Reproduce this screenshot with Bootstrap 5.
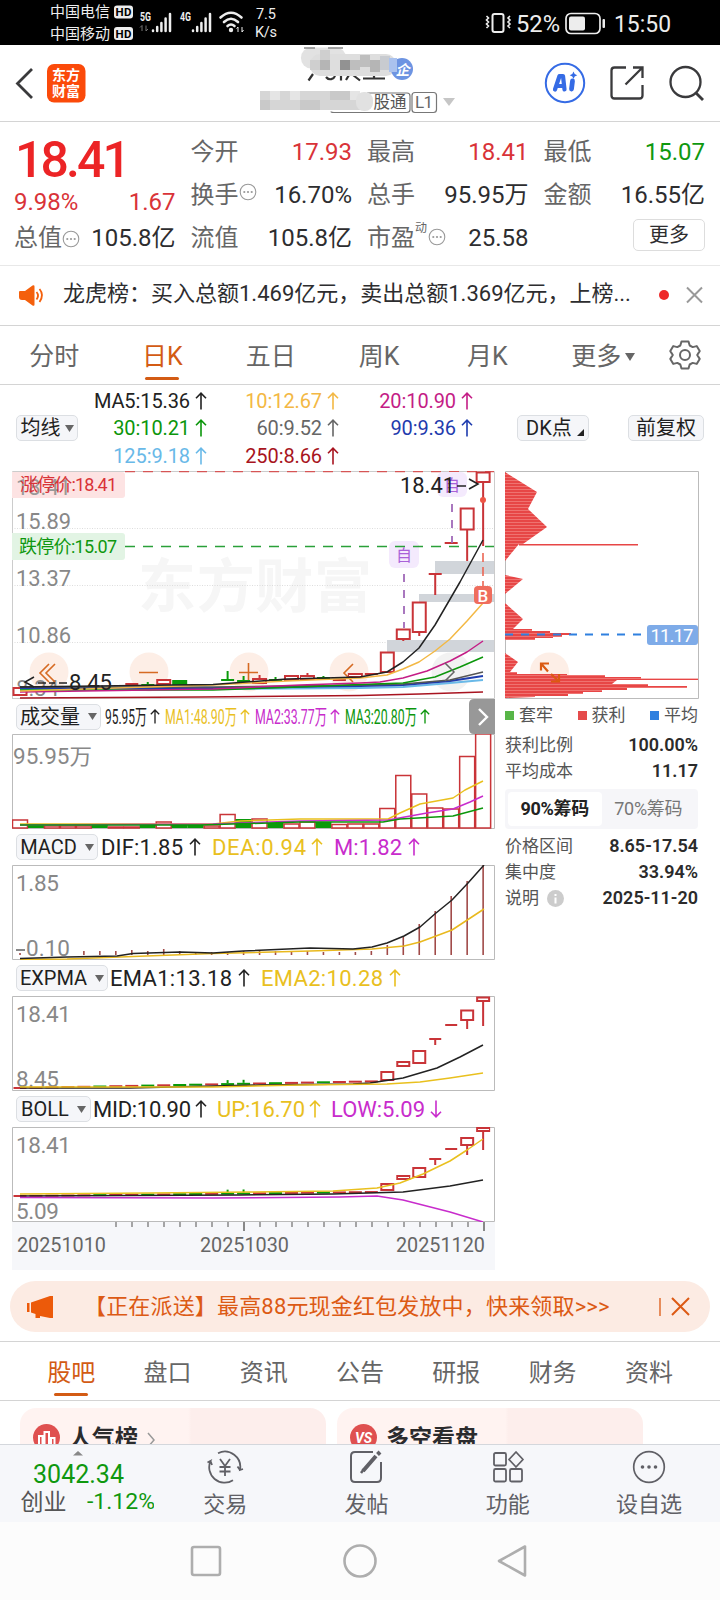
<!DOCTYPE html>
<html lang="zh-CN">
<head>
<meta charset="utf-8">
<meta name="viewport" content="width=device-width, initial-scale=1">
<title>东方财富 行情</title>
<link href="https://cdn.jsdelivr.net/npm/bootstrap@5.3.0/dist/css/bootstrap.min.css" rel="stylesheet">
<style>
body{width:720px;height:1600px;overflow:hidden;background:#fff;color:#2d2d2f;font-family:Roboto,"Noto Sans CJK SC",sans-serif;font-size:24px;line-height:1}
svg{display:block;flex:none}
svg text{font-family:Roboto,"Noto Sans CJK SC",sans-serif}
.up{color:#d93338}.dn{color:#0f980f}.lab{color:#666}
.statusbar{height:45px;background:#000}
.topbar{height:77px;border-bottom:1px solid #d4d4d4}
.quote{height:144px;border-bottom:1px solid #e8e8e8;padding:8px 0 0 14px;display:grid;grid-template-columns:repeat(4,161.5px);grid-template-rows:repeat(3,43px);column-gap:15px}
.quote>div{display:flex;align-items:center;justify-content:space-between;white-space:nowrap}
.price{font-size:50px;font-weight:500;letter-spacing:-2.9px;color:#ec2426;padding:16px 0 0 1px}
.morebtn{width:72px;height:32px;border:1px solid #ddd;border-radius:5px;font-size:20px;margin-bottom:5px}
.news{height:60px;border-bottom:1px solid #d4d4d4;font-size:22px;padding-left:18px}
.ktabs{height:59px;border-bottom:1px solid #d4d4d4;color:#666;font-size:25px;padding-top:3px}
.ktab{width:108.3px;position:relative}
.active-tab{color:#d35b14}
.active-tab::after{content:"";position:absolute;left:50%;width:34px;height:3px;margin-left:-17px;background:#d35b14;border-radius:2px;bottom:4px}
.ma{height:86px;padding-left:16px;font-size:20px}
.tagbtn{height:26px;background:#f5f6f9;border:1px solid #dcdfe3;border-radius:5px;font-size:20px;color:#1f1f21;white-space:nowrap;flex:none}
.magrid{display:grid;grid-template-columns:129px 132px 134px;grid-auto-rows:27.5px;padding-top:2px}
.magrid>div{display:flex;align-items:center;justify-content:flex-end;gap:5px;font-size:20px;letter-spacing:-.1px}
.charts{width:483px;margin-left:12px}
.indic{height:36px;padding-left:4px}
.indic svg{overflow:visible}
.chips{margin-left:10px;width:193px}
.chiprow{height:26px;font-size:17px;color:#555}
.chiprow b{color:#2b2b2b;font-weight:600;font-size:18px}
.seg{height:40px;background:#f6f6f9;border-radius:4px;padding:3px;margin:6px 0 4px;font-size:18px;color:#777}
.seg>div{width:50%;height:34px;letter-spacing:-.3px}
.seg-on{background:#fff;color:#222;font-weight:700;border-radius:4px;letter-spacing:-.8px}
.axis{height:48px;background:#f6f7fa}
.promo{height:51px;margin:11px 10px 9px;border-radius:26px;background:#fcebe3;color:#dc5a14;font-size:22px;padding:0 18px 0 15px;white-space:nowrap}
.btabs{height:60px;border-top:1px solid #d4d4d4;border-bottom:1px solid #d4d4d4;padding:3px 0 0 23px;color:#666;font-size:24px}
.btab{width:96.3px;position:relative}
.feeds{height:43px;overflow:hidden;padding:7px 0 0 20px;gap:11px}
.feed{width:306px;height:90px;border-radius:16px;flex:none;background:linear-gradient(90deg,#fff3f1 55%,#fdeeec 56%);font-size:23px;font-weight:700;color:#2b2b2d;padding:16px 0 0 13px;gap:9px}
.feed span{margin-top:3px}
.toolbar{height:78px;background:#f6f7fa;border-top:1px solid #d4d7dc}
.tool{width:141.3px;color:#606066;font-size:22px;gap:10px;padding:5px 0 0 1px}
.sysnav{height:79px;background:#fcfcfc}
</style>
</head>
<body>
<svg width="0" height="0" class="position-absolute">
  <defs>
    <symbol id="au" viewBox="0 0 12 18"><path d="M6 17.5V1.2M1 6.2L6 1.2l5 5" fill="none" stroke="currentColor" stroke-width="1.6"/></symbol>
    <symbol id="ad" viewBox="0 0 12 18"><path d="M6 .5v16.3M1 11.8l5 5 5-5" fill="none" stroke="currentColor" stroke-width="1.6"/></symbol>
    <symbol id="dots" viewBox="0 0 18 18"><circle cx="9" cy="9" r="7.8" fill="none" stroke="#999" stroke-width="1.1"/><g fill="#999"><circle cx="5.3" cy="9" r="1.1"/><circle cx="9" cy="9" r="1.1"/><circle cx="12.7" cy="9" r="1.1"/></g></symbol>
    <pattern id="stripe" width="4" height="3" patternUnits="userSpaceOnUse"><rect width="4" height="3" fill="#e74646"/><rect width="4" height=".8" fill="#f17d7b"/></pattern>
    <symbol id="bars" viewBox="0 0 22 21"><path d="M2 18.500v.5M6.2 15v4M10.4 11v8M14.600 6.500V19M19 2v17" stroke="#eee" stroke-width="2.500" stroke-linecap="round"/></symbol>
  </defs>
</svg>

<header class="statusbar">
  <svg width="720" height="45" fill="#ededed">
    <text x="50" y="17" font-size="15" textLength="60">中国电信</text><text x="50" y="38.500" font-size="15" textLength="60">中国移动</text>
    <rect x="114" y="5.500" width="19" height="13" rx="3"/><rect x="114" y="27" width="19" height="13" rx="3"/>
    <g fill="#000" font-weight="700" font-size="11.500"><text x="115.500" y="16" textLength="16">HD</text><text x="115.500" y="37.600" textLength="16">HD</text></g>
    <g font-size="12" font-weight="700"><text x="140" y="21" textLength="11" lengthAdjust="spacingAndGlyphs">5G</text><text x="180" y="21" textLength="11" lengthAdjust="spacingAndGlyphs">4G</text></g>
    <path d="M142 31V25.500l-2 2M146 25.500V31l2-2" stroke="#777" fill="none"/>
    <use href="#bars" x="151" y="12" width="22" height="21"/><use href="#bars" x="191" y="12" width="22" height="21"/>
    <g fill="none" stroke="#ededed" stroke-width="2.600" stroke-linecap="round"><path d="M220.500 17.500Q231 8 241.500 17.500M224 22Q231 15.500 238 22M227.500 26Q231 23 234.500 26"/></g><circle cx="231" cy="30" r="2.200"/>
    <path d="M238 32V27l-1.500 1.500M242 27v5l1.500-2" stroke="#ededed" fill="none"/>
    <text x="256" y="19" font-size="14.500" textLength="20">7.5</text><text x="255" y="37" font-size="14.500" textLength="22">K/s</text>
    <rect x="492.500" y="14" width="11" height="18" rx="2" fill="none" stroke="#ededed" stroke-width="2"/>
    <path d="M486.500 16l2 2-2 2 2 2-2 2 2 2-2 2M510 16l-2 2 2 2-2 2 2 2-2 2 2 2" fill="none" stroke="#ededed" stroke-width="1.600"/>
    <text x="516" y="31.500" font-size="23" textLength="44" lengthAdjust="spacingAndGlyphs">52%</text>
    <rect x="566" y="13.500" width="34" height="20" rx="5" fill="none" stroke="#ededed" stroke-width="1.700"/><rect x="569" y="16.500" width="16" height="14" rx="2"/><rect x="602.500" y="19" width="2.500" height="9" rx="1"/>
    <text x="614" y="31.500" font-size="23.500" textLength="57" lengthAdjust="spacingAndGlyphs">15:50</text>
  </svg>
</header>

<nav class="topbar d-flex">
  <svg width="720" height="76" viewBox="0 45 720 76">
    <path d="M32 69L17.500 83.500 32 98" fill="none" stroke="#3a3a3c" stroke-width="2.800"/>
    <rect x="47" y="64" width="38.500" height="38.500" rx="7" fill="#fb4a0a"/>
    <g fill="#fff" font-size="14" font-weight="700"><text x="52" y="80" textLength="28">东方</text><text x="52" y="96" textLength="28">财富</text></g>
    <path d="M313 74l-4.500 6.500M326 77c3 4 8 2 9-1M341 75v5.500M349 75l-3 5M353 75l7 5.500M363 78.500h22M374 70v9" fill="none" stroke="#333" stroke-width="2.200"/>
    <rect x="301" y="47.500" width="45" height="21" rx="10" fill="#e2e2e2"/><rect x="310" y="54" width="86" height="22" rx="10" fill="#dedede"/>
    <path d="M304 48h11M328 48h15" stroke="#888" stroke-width="1.500"/>
    <g><path fill="#cfcfcf" d="M310 60h10v10h-10zM320 50h10v10h-10z"/><path fill="#b5b5b5" d="M320 60h10v10h-10zM370 60h10v12h-10z"/><path fill="#929292" d="M340 60h10v10h-10z"/><path fill="#bebebe" d="M350 60h10v10h-10zM360 55h10v12h-10z"/><path fill="#c8cbd0" d="M380 56h10v14h-10z"/></g>
    <circle cx="402" cy="69" r="11" fill="#6d94e2"/><path d="M389 58h8v14h-8z" fill="#aac2ee"/><text x="395.500" y="74.500" font-size="14" font-weight="700" font-style="italic" fill="#fff">企</text>
    <path d="M331 111.500q0 1 3 1h73q3 0 3-3V96q0-3-3-3h-40" fill="none" stroke="#777" stroke-width="1.200"/>
    <path fill="#d6d6d6" d="M260 91h100v19H260z"/><path fill="#c9c9c9" d="M260 100h10v10h-10zM300 100h20v10h-20zM330 91h20v9h-20z"/><path fill="#e5e5e5" d="M270 91h10v9h-10zM290 91h10v9h-10zM350 91h10v9h-10z"/>
    <rect x="356" y="92" width="17" height="19" rx="8" fill="#e1e1e1"/>
    <text x="373.500" y="107.500" font-size="16.500" fill="#555" textLength="33">股通</text>
    <rect x="412" y="92.500" width="24.500" height="20" rx="3" fill="none" stroke="#777" stroke-width="1.200"/><text x="415" y="108" font-size="17" fill="#666" textLength="18">L1</text>
    <path d="M443 98h12l-6 8z" fill="#c6c6c6"/>
    <circle cx="565" cy="83" r="19.200" fill="none" stroke="#356be5" stroke-width="2"/>
    <path d="M555 89.500l4.500-13.500h3.500l1.500 13.500M557.500 86h6" fill="none" stroke="#356be5" stroke-width="4.200" stroke-linejoin="round" stroke-linecap="round"/><path d="M572.500 81l-1 8" stroke="#356be5" stroke-width="4.800" stroke-linecap="round"/><path d="M573.500 71.500l1.200 2.600 2.600 1.200-2.600 1.200-1.200 2.600-1.200-2.600-2.600-1.200 2.600-1.200z" fill="#356be5"/>
    <path d="M626 67.500h-11.500q-3 0-3 3v25q0 3 3 3h25q3 0 3-3V85M633 67.500h9.500V78M642 68l-16.500 16.500" fill="none" stroke="#3a3a3c" stroke-width="2.300"/>
    <circle cx="685.500" cy="82" r="15" fill="none" stroke="#3a3a3c" stroke-width="2.300"/><path d="M696 93l7 7" stroke="#3a3a3c" stroke-width="2.800"/>
  </svg>
</nav>

<section class="quote">
  <div class="price">18.41</div>
  <div><span class="lab">今开</span><span class="up">17.93</span></div>
  <div><span class="lab">最高</span><span class="up">18.41</span></div>
  <div><span class="lab">最低</span><span class="dn">15.07</span></div>
  <div class="up" style="padding-top:14px"><span>9.98%</span><span>1.67</span></div>
  <div><span class="lab d-flex">换手<svg width="18" height="18"><use href="#dots"/></svg></span><span>16.70%</span></div>
  <div><span class="lab">总手</span><span>95.95万</span></div>
  <div><span class="lab">金额</span><span>16.55亿</span></div>
  <div><span class="lab d-flex">总值<svg class="mt-1" width="18" height="18"><use href="#dots"/></svg></span><span>105.8亿</span></div>
  <div><span class="lab">流值</span><span>105.8亿</span></div>
  <div><span class="lab d-flex align-items-center">市盈<svg width="32" height="32"><text x="0" y="10" font-size="12" fill="#666">动</text><use href="#dots" x="13" y="6" width="18" height="18"/></svg></span><span>25.58</span></div>
  <div class="justify-content-end"><span class="morebtn d-flex align-items-center justify-content-center">更多</span></div>
</section>

<section class="news d-flex align-items-center">
  <svg width="45" height="30" viewBox="0 0 45 30"><path d="M1 11q0-1 1-1h5l7.500-5.500q2-1 2 1v18q0 2-2 1L7 19H4q-3 0-3-3z" fill="#f4600c"/><path d="M18.500 11q3 3.500 0 7.500M21.500 8q5 6 0 13" fill="none" stroke="#f4600c" stroke-width="1.800"/></svg>
  <span class="flex-shrink-0 pb-1">龙虎榜：买入总额1.469亿元，卖出总额1.369亿元，上榜...</span>
  <svg class="ms-auto me-3" width="52" height="32"><circle cx="12" cy="15" r="5" fill="#ee2828"/><path d="M35 7.500l15 15M50 7.500l-15 15" stroke="#999" stroke-width="2"/></svg>
</section>

<nav class="ktabs d-flex">
  <span class="ktab d-flex align-items-center justify-content-center">分时</span>
  <span class="ktab active-tab d-flex align-items-center justify-content-center">日K</span>
  <span class="ktab d-flex align-items-center justify-content-center">五日</span>
  <span class="ktab d-flex align-items-center justify-content-center">周K</span>
  <span class="ktab d-flex align-items-center justify-content-center">月K</span>
  <span class="ktab d-flex align-items-center justify-content-center ps-3 gap-1">更多<svg width="11" height="10"><path d="M0 1h10L5 9z" fill="#666"/></svg></span>
  <svg class="ms-auto align-self-center me-3 mb-1" width="35" height="32" viewBox="0 0 35 32" fill="none" stroke="#666" stroke-width="2"><path d="M12.500 2.500h7l1.200 4 3 1.600 4-1 3 5-2.500 3.900 2.500 3.900-3 5-4-1-3 1.600-1.200 4h-7l-1.200-4-3-1.600-4 1-3-5L3.800 16 1.300 12.100l3-5 4 1 3-1.600z" stroke-linejoin="round"/><circle cx="16" cy="16" r="5"/></svg>
</nav>

<section class="ma d-flex">
  <div class="tagbtn d-flex align-items-center justify-content-center align-self-center gap-1" style="width:62px">均线<svg width="9" height="9"><path d="M0 1h9L4.500 8z" fill="#666"/></svg></div>
  <div class="magrid">
    <div style="color:#222">MA5:15.36<svg width="12" height="18"><use href="#au"/></svg></div>
    <div style="color:#f3b844">10:12.67<svg width="12" height="18"><use href="#au"/></svg></div>
    <div style="color:#c41d86">20:10.90<svg width="12" height="18"><use href="#au"/></svg></div>
    <div style="color:#0b960b">30:10.21<svg width="12" height="18"><use href="#au"/></svg></div>
    <div style="color:#666">60:9.52<svg width="12" height="18"><use href="#au"/></svg></div>
    <div style="color:#1f3cae">90:9.36<svg width="12" height="18"><use href="#au"/></svg></div>
    <div style="color:#69b9e8">125:9.18<svg width="12" height="18"><use href="#au"/></svg></div>
    <div style="color:#a81420">250:8.66<svg width="12" height="18"><use href="#au"/></svg></div>
  </div>
  <div class="tagbtn d-flex align-items-center align-self-center ps-2" style="width:72px;margin-left:44px">DK点<svg class="ms-auto me-1 align-self-end mb-1" width="7" height="7"><path d="M7 0v7H0z" fill="#222"/></svg></div>
  <div class="tagbtn d-flex align-items-center justify-content-center align-self-center" style="width:76px;margin-left:39px">前复权</div>
</section>

<main class="d-flex">
  <div class="charts">
    <svg id="main" width="483" height="228" viewBox="12 471 483 228">
      <text x="138" y="607" font-size="58" font-weight="700" fill="#f6f6f6" textLength="234">东方财富</text>
      <path d="M12 528.500h482M12 585.500h482M12 642.500h482" stroke="#ddd" stroke-dasharray="1 1.500"/>
      <path d="M12.500 699V471.500H494.500V698.500H12" fill="none" stroke="#ccc"/>
      <path d="M387 640h107v12H387zM419 594h75v8h-75zM435 561h59v13h-59z" fill="#d1d5da"/>
      <g fill="#fdeee6"><circle cx="49" cy="672" r="19.500"/><circle cx="149" cy="672" r="19.500"/><circle cx="249" cy="672" r="19.500"/><circle cx="349" cy="672" r="19.500"/></g><circle cx="451" cy="672" r="19.500" fill="#eee" opacity=".75"/>
      <path d="M125 471.500h369" stroke="#d65555" stroke-width="1.500" stroke-dasharray="10 8"/><path d="M125 546.500h369" stroke="#2aa039" stroke-width="1.400" stroke-dasharray="10 8"/>
      <g font-size="22.500" fill="#888"><text x="16" y="528.500" textLength="55" lengthAdjust="spacingAndGlyphs">15.89</text><text x="16" y="585.500" textLength="55" lengthAdjust="spacingAndGlyphs">13.37</text><text x="16" y="642.500" textLength="55" lengthAdjust="spacingAndGlyphs">10.86</text><text x="16" y="696" textLength="43" lengthAdjust="spacingAndGlyphs">8.34</text></g>
      <path d="M12 472h110q3 0 3 3v20q0 3-3 3H12z" fill="#fde3e3"/><path d="M12 533h110q3 0 3 3v21q0 3-3 3H12z" fill="#e2f4e4"/>
      <text x="16" y="494.500" font-size="22.500" fill="#999" textLength="55" lengthAdjust="spacingAndGlyphs">18.41</text>
      <g font-size="18"><text x="20" y="491" fill="#d93338" textLength="97">涨停价:18.41</text><text x="19" y="552.500" fill="#0f980f" textLength="98">跌停价:15.07</text></g>
      <g fill="none" stroke="#d66a22" stroke-width="1.600"><path d="M49 664l-9 9 9 9M55 664l-9 9 9 9M139 672.500h19M239 672.500h19M248.500 663v19M353 664l-9 9 9 9"/></g>
      <g id="mainSeries"></g>
      <path d="M445 663l9 9-9 9" fill="none" stroke="#666" stroke-width="1.500"/>
      <path d="M404 574v54M452 504v39" stroke="#a069b8" stroke-width="1.800" stroke-dasharray="8 8"/>
      <path d="M483 553v34" stroke="#ec6654" stroke-width="1.600" stroke-dasharray="9 5"/><circle cx="483" cy="500" r="3" fill="#ee5545"/>
      <g fill="#f4eafd"><rect x="389" y="541" width="30" height="27" rx="6"/><rect x="437" y="472" width="30" height="25" rx="6"/></g>
      <path d="M389 546.500h30" stroke="#2aa039" stroke-width="1.400" stroke-dasharray="10 8" stroke-dashoffset="12"/>
      <g font-size="16" fill="#a961d8"><text x="396" y="561">自</text><text x="444" y="491">自</text></g>
      <rect x="474" y="586" width="18" height="18" rx="4" fill="#ef6d5d"/><text x="477.500" y="601.500" font-size="17" fill="#fff" font-weight="500">B</text>
      <text x="400" y="493" font-size="22" fill="#222" textLength="55" lengthAdjust="spacingAndGlyphs">18.41</text><path d="M457 486h9M469 479l9 5-9 5" stroke="#222" stroke-width="1.600" fill="none"/>
      <path d="M34 677l-9 5 9 5M38 683h8M49 683h6M59 683h8" stroke="#222" stroke-width="1.500" fill="none"/><text x="69" y="690" font-size="22" fill="#222" textLength="43" lengthAdjust="spacingAndGlyphs">8.45</text>
    </svg>
    <div class="indic d-flex align-items-center" style="height:35px">
      <div class="tagbtn d-flex align-items-center justify-content-center gap-2" style="width:85px">成交量<svg width="9" height="9"><path d="M0 1h9L4.500 8z" fill="#666"/></svg></div>
      <svg width="390" height="35" viewBox="101 699 390 35" font-size="21">
        <g fill="#222" color="#222"><text x="105" y="724" textLength="42" lengthAdjust="spacingAndGlyphs">95.95万</text><use href="#au" x="150" y="708" width="10" height="17"/></g>
        <g fill="#e9c01e" color="#e9c01e"><text x="165" y="724" textLength="72" lengthAdjust="spacingAndGlyphs">MA1:48.90万</text><use href="#au" x="240" y="708" width="10" height="17"/></g>
        <g fill="#c82ccc" color="#c82ccc"><text x="255" y="724" textLength="72" lengthAdjust="spacingAndGlyphs">MA2:33.77万</text><use href="#au" x="330" y="708" width="10" height="17"/></g>
        <g fill="#0b960b" color="#0b960b"><text x="345" y="724" textLength="72" lengthAdjust="spacingAndGlyphs">MA3:20.80万</text><use href="#au" x="420" y="708" width="10" height="17"/></g>
        <path d="M495 699v35h-21q-5 0-5-5v-25q0-5 5-5z" fill="#989898"/><path d="M479 709l8 8-8 8" fill="none" stroke="#fff" stroke-width="2.400"/>
      </svg>
    </div>
    <svg id="vol" width="483" height="95" viewBox="12 734 483 95"><path d="M12.500 734.500h482v94h-482z" fill="none" stroke="#bbb"/><text x="13" y="763.500" font-size="22" fill="#888" textLength="79" lengthAdjust="spacingAndGlyphs">95.95万</text><g></g></svg>
    <div class="indic d-flex align-items-center">
      <div class="tagbtn d-flex align-items-center justify-content-center gap-2" style="width:82px">MACD<svg width="9" height="9"><path d="M0 1h9L4.500 8z" fill="#666"/></svg></div>
      <svg width="390" height="36" viewBox="98 829 390 36" font-size="22">
        <g fill="#222" color="#222"><text x="101" y="855" textLength="82">DIF:1.85</text><use href="#au" x="189" y="838" width="12" height="18"/></g>
        <g fill="#e9c01e" color="#e9c01e"><text x="212" y="855" textLength="94">DEA:0.94</text><use href="#au" x="311" y="838" width="12" height="18"/></g>
        <g fill="#c82ccc" color="#c82ccc"><text x="334" y="855" textLength="68">M:1.82</text><use href="#au" x="408" y="838" width="12" height="18"/></g>
      </svg>
    </div>
    <svg id="macd" width="483" height="95" viewBox="12 865 483 95"><path d="M12.500 865.500h482v94h-482z" fill="none" stroke="#bbb"/><g font-size="22.500" fill="#888"><text x="16" y="890.500" textLength="43">1.85</text><text x="26" y="956" textLength="44">0.10</text><path d="M16 950h9" stroke="#888" stroke-width="2"/></g><g></g></svg>
    <div class="indic d-flex align-items-center">
      <div class="tagbtn d-flex align-items-center justify-content-center gap-2" style="width:92px">EXPMA<svg width="9" height="9"><path d="M0 1h9L4.500 8z" fill="#666"/></svg></div>
      <svg width="380" height="36" viewBox="108 960 380 36" font-size="22">
        <g fill="#222" color="#222"><text x="110" y="986" textLength="122">EMA1:13.18</text><use href="#au" x="238" y="969" width="12" height="18"/></g>
        <g fill="#e9c01e" color="#e9c01e"><text x="261" y="986" textLength="122">EMA2:10.28</text><use href="#au" x="389" y="969" width="12" height="18"/></g>
      </svg>
    </div>
    <svg id="expma" width="483" height="95" viewBox="12 996 483 95"><path d="M12.500 996.500h482v94h-482z" fill="none" stroke="#bbb"/><g font-size="22.500" fill="#888"><text x="16" y="1021.500" textLength="55">18.41</text><text x="16" y="1087" textLength="43">8.45</text></g><g></g></svg>
    <div class="indic d-flex align-items-center">
      <div class="tagbtn d-flex align-items-center justify-content-center gap-2" style="width:75px">BOLL<svg width="9" height="9"><path d="M0 1h9L4.500 8z" fill="#666"/></svg></div>
      <svg width="390" height="36" viewBox="91 1091 390 36" font-size="22">
        <g fill="#222" color="#222"><text x="93" y="1117" textLength="98">MID:10.90</text><use href="#au" x="195" y="1100" width="12" height="18"/></g>
        <g fill="#e9c01e" color="#e9c01e"><text x="217" y="1117" textLength="88">UP:16.70</text><use href="#au" x="309" y="1100" width="12" height="18"/></g>
        <g fill="#c82ccc" color="#c82ccc"><text x="331" y="1117" textLength="94">LOW:5.09</text><use href="#ad" x="430" y="1100" width="12" height="18"/></g>
      </svg>
    </div>
    <svg id="boll" width="483" height="95" viewBox="12 1127 483 95"><path d="M12.500 1127.500h482v94h-482z" fill="none" stroke="#bbb"/><g font-size="22.500" fill="#888"><text x="16" y="1152.500" textLength="55">18.41</text><text x="16" y="1218.500" textLength="43">5.09</text></g><g></g></svg>
    <svg id="axis" class="axis" width="483" height="48" viewBox="12 1222 483 48"><g font-size="21" fill="#666"><text x="17" y="1251.500" textLength="89" lengthAdjust="spacingAndGlyphs">20251010</text><text x="200" y="1251.500" textLength="89" lengthAdjust="spacingAndGlyphs">20251030</text><text x="396" y="1251.500" textLength="89" lengthAdjust="spacingAndGlyphs">20251120</text></g><g></g></svg>
  </div>
  <aside class="chips">
    <svg width="194" height="228" viewBox="505 471 194 228">
      <path d="M505.500 471.500h193v227h-193z" fill="#fff" stroke="#bbb"/>
      <circle cx="549.500" cy="672" r="19.500" fill="#fdeee6"/>
      <path fill="url(#stripe)" d="M505 472L537 492 528 509 547 527 523 544H519L505 561zM505 575L514 577 523 579 505 594zM505 603L523 619 513 629H532V631H550V633H571V635H562V637H553V638H535V640H505zM505 653L518 662 510 672H517V674H567V675H605V677H641V678.500H698V680H617L612 684H648V686H687V688H627V690H602V692H583V694H568V696H535V697L505 698z"/>
      <path d="M519 544.700h119M550 633.700h21" stroke="#e74646" stroke-width="1.600"/>
      <path d="M505 634.500h136" stroke="#2f80df" stroke-width="1.800" stroke-dasharray="8 8"/>
      <rect x="647" y="625" width="51" height="20" rx="3" fill="#7eabe8"/><text x="650.500" y="641.500" font-size="18.500" fill="#fff" textLength="43">11.17</text>
      <path d="M541 670.500v-7h8M541 663.500l7 8M551 674l8 7.500M559 674v7.500h-8" fill="none" stroke="#db5a12" stroke-width="2.200"/>
    </svg>
    <div class="d-flex justify-content-between align-items-center chiprow" style="height:33px">
      <span class="d-flex align-items-center"><svg width="14" height="9"><path d="M0 0h9v9H0z" fill="#58b548"/></svg>套牢</span><span class="d-flex align-items-center"><svg width="14" height="9"><path d="M0 0h9v9H0z" fill="#e54b4b"/></svg>获利</span><span class="d-flex align-items-center"><svg width="14" height="9"><path d="M0 0h9v9H0z" fill="#2f80df"/></svg>平均</span>
    </div>
    <div class="chiprow d-flex justify-content-between align-items-center">获利比例<b>100.00%</b></div>
    <div class="chiprow d-flex justify-content-between align-items-center">平均成本<b>11.17</b></div>
    <div class="seg d-flex" style="margin-top:5px"><div class="seg-on d-flex align-items-center justify-content-center">90%筹码</div><div class="d-flex align-items-center justify-content-center">70%筹码</div></div>
    <div class="chiprow d-flex justify-content-between align-items-center">价格区间<b>8.65-17.54</b></div>
    <div class="chiprow d-flex justify-content-between align-items-center">集中度<b>33.94%</b></div>
    <div class="chiprow d-flex justify-content-between align-items-center"><span class="d-flex gap-2">说明<svg width="17" height="17"><circle cx="8.500" cy="8.500" r="8.500" fill="#ccc"/><path d="M8.500 4v2M8.500 7.500v6" stroke="#fff" stroke-width="2"/></svg></span><b>2025-11-20</b></div>
  </aside>
</main>

<section class="promo d-flex align-items-center">
  <svg width="59" height="28" viewBox="0 0 59 28"><path d="M2 10h2.500v9H2zM6 9.500L25 3h3v22h-3l-10-2v2h-4.500v-4L6 19.500z" fill="#ec5a0a"/></svg>
  <span style="letter-spacing:.17px">【正在派送】最高88元现金红包发放中，快来领取&gt;&gt;&gt;</span>
  <svg class="ms-auto" width="34" height="24"><path d="M2 3v18" stroke="#dc5a14" stroke-width="1.300"/><path d="M14 3l17 17M31 3L14 20" stroke="#dc5a14" stroke-width="2"/></svg>
</section>

<nav class="btabs d-flex">
  <span class="btab active-tab d-flex align-items-center justify-content-center">股吧</span><span class="btab d-flex align-items-center justify-content-center">盘口</span><span class="btab d-flex align-items-center justify-content-center">资讯</span><span class="btab d-flex align-items-center justify-content-center">公告</span><span class="btab d-flex align-items-center justify-content-center">研报</span><span class="btab d-flex align-items-center justify-content-center">财务</span><span class="btab d-flex align-items-center justify-content-center">资料</span>
</nav>
<section class="feeds d-flex">
  <div class="feed d-flex align-items-start"><svg width="27" height="27"><circle cx="13.500" cy="13.500" r="13.500" fill="#df5050"/><path d="M6 22V12h3.500v10M11.500 22V8h4.500v14M18 22v-8h3.500v8" fill="none" stroke="#fff" stroke-width="2"/></svg><span>人气榜</span><svg class="mt-2" width="10" height="17"><path d="M1 1l6 7-6 7" fill="none" stroke="#999" stroke-width="1.500"/></svg></div>
  <div class="feed d-flex align-items-start"><svg width="27" height="27"><circle cx="13.500" cy="13.500" r="13.500" fill="#df5050"/><text x="5" y="19" font-size="14" font-weight="700" font-style="italic" fill="#fff">VS</text></svg><span>多空看盘</span></div>
</section>

<footer class="toolbar d-flex">
  <svg width="154" height="77" viewBox="0 1444 154 77"><path d="M73 1454.500l5-4.500 5 4.500z" fill="#888"/><text x="33" y="1481.500" font-size="25.500" fill="#0f980f" textLength="91" lengthAdjust="spacingAndGlyphs">3042.34</text><text x="20.500" y="1508.500" font-size="23" fill="#555">创业</text><text x="87" y="1508" font-size="22.500" fill="#0f980f" textLength="68" lengthAdjust="spacingAndGlyphs">-1.12%</text></svg>
  <div class="tool d-flex flex-column align-items-center"><svg width="38" height="34" viewBox="0 0 38 34" fill="none" stroke="#606066" stroke-width="1.800"><path d="M12 3.200A15.500 15.500 0 0 1 34 20l3-1M34 20l-2.500-3.500M27 30.300A15.500 15.500 0 0 1 4.500 11l-3 1.500M4.500 11l1.500 4"/><path d="M14 9l5 7 5-7M13.500 17h11M13.500 21.500h11M19 16v10"/></svg>交易</div>
  <div class="tool d-flex flex-column align-items-center"><svg width="34" height="34" viewBox="0 0 34 34" fill="none" stroke="#606066" stroke-width="2"><path d="M24 2H6Q2 2 2 6v22q0 4 4 4h22q4 0 4-4V12"/><path d="M31 2l-2.500 2.500M27 6L14 21" stroke-width="4"/><path d="M15 19l-3 4" stroke-width="2.500"/></svg>发帖</div>
  <div class="tool d-flex flex-column align-items-center"><svg width="34" height="34" viewBox="0 0 34 34" fill="none" stroke="#606066" stroke-width="1.800"><rect x="3" y="3" width="12" height="12.500" rx="1.500"/><rect x="3" y="19" width="12" height="12.500" rx="1.500"/><rect x="19" y="19" width="12" height="12.500" rx="1.500"/><path d="M25 2l7 7.500-7 7.500-7-7.500z" stroke-linejoin="round"/></svg>功能</div>
  <div class="tool d-flex flex-column align-items-center"><svg width="34" height="34" viewBox="0 0 34 34"><circle cx="17" cy="17" r="15.300" fill="none" stroke="#606066" stroke-width="1.700"/><g fill="#606066"><circle cx="10.500" cy="17" r="1.800"/><circle cx="17" cy="17" r="1.800"/><circle cx="23.500" cy="17" r="1.800"/></g></svg>设自选</div>
</footer>
<div class="sysnav"><svg width="720" height="79" viewBox="0 1522 720 79" fill="none" stroke="#aeaeae" stroke-width="2.600"><rect x="192" y="1547" width="28" height="28" rx="2"/><circle cx="360" cy="1561" r="15.500"/><path d="M525 1546.500v29L499 1561z" stroke-linejoin="round"/></svg></div>

<script src="https://cdn.jsdelivr.net/npm/bootstrap@5.3.0/dist/js/bootstrap.bundle.min.js"></script>
<script>
const R='#c93438', G='#0a9a0a', X=i=>20+15.97*i;
const line=(pts,c,w=1.5)=>`<polyline points="${pts}" fill="none" stroke="${c}" stroke-width="${w}" stroke-linejoin="round"/>`;
// candle: [index, top, bottom, high, low, colour]
const candle=([i,t,b,h,l,c=R],w=13)=>{const x=X(i);
  const body=b-t<3?`<path d="M${x-w/2} ${(t+b)/2}h${w}" stroke="${c}" stroke-width="${Math.max(2,b-t)}"/>`:`<rect x="${x-w/2}" y="${t}" width="${w}" height="${b-t}" fill="${c===G?G:'#fff'}" stroke="${c}" stroke-width="2"/>`;
  return `<path d="M${x} ${h}V${t}M${x} ${b}V${l}" stroke="${c}" stroke-width="2"/>`+body;};
const put=(sel,html)=>document.querySelector(sel).innerHTML=html;
const main=[[0,688,695,688,695],[7,683,685,683,685],[8,684,686,682,686,G],[9,680,684,680,684],[10,681,684,680,684,G],[13,679,681,671,681,G],[14,680,682,676,682,G],[15,679,683,675,683],[16,679,681,677,682,G],[17,676,680,675,680],[18,676,679,673,679],[19,677,679,676,680,G],[20,679,681,679,681],[21,674,677,674,677],[22,673,675,673,675],[23,652.5,672,652,672],[24,629.5,639,629,641],[25,602.5,632,602,636],[26,573,575,574,595],[27,542,544,543,543],[28,508.5,529.5,508,561],[29,472.5,482,472,546]];
put('#mainSeries',main.map(c=>candle(c)).join('')
 +line('20,698 200,697 360,695.5 420,694 483,692','#a81420')
 +line('20,690 213,689 360,688 403,687 450,683 483,680','#69b9e8',2)
 +line('20,688 213,688 360,686 403,685 450,681 483,676','#1f3cae',2)
 +line('20,687 213,687 360,685 403,684 450,680 483,672','#555')
 +line('20,690 213,690 300,687 360,684.5 403,683 435,677 460,667 483,657','#0b960b')
 +line('20,692 213,689 300,685 360,683 380,682 403,678 427,671 450,661 467,652 483,641','#c41d86')
 +line('20,691 213,685 287,681 360,678 387,675 403,669 419,662 435,651 450,639 467,621 483,603','#f3b844')
 +line('20,687 213,684.5 287,679 325,678 360,677 387,672 403,662 419,648 435,625 460,582 483,540','#222'));
const vols=[820,824,826,826,826,824,827,827,824,822,824,824,826,814.5,819,819,823,824,822,822,824.5,824,824,808.5,775.5,794,808,809,756.5,734], green=[1,5,8,10,11,14,16,19];
put('#vol g',vols.map((y,i)=>green.includes(i)?`<path d="M${X(i)-8} ${y}h16V828h-16z" fill="${G}"/>`:`<path d="M${X(i)-7.5} 828V${y}h15V828z" fill="#fff" stroke="${R}" stroke-width="1.5"/>`).join('')
 +line('20,824 213,824 240,821 300,819 388,819 400,813 420,804 453,798 465,790 483,781','#e9c01e')
 +line('20,825 213,824 300,821 388,820 427,813 453,809 470,802 483,796','#c82ccc')
 +line('20,825 200,825 300,822 383,822 400,819 453,816 483,808','#0b960b'));
const hist=[953,0,0,0,951,951,951,950,951,949,951,952,952,952,951,950,951,951,951,952,952,952,951,945,936,924,911,896,881,865];
put('#macd g:last-child',hist.map((y,i)=>y?`<path d="M${X(i)} 955V${y}" stroke="#a04a48" stroke-width="1.6"/>`:'').join('')
 +line('20,959.5 67,959 133,956.5 213,953.5 310,951 372,949 404,946 420,942 452,930 484,909','#e9b91e')
 +line('20,958.5 67,957 117,956 133,953.5 180,952 213,953 243,951 310,948 353,949 372,947 387,943 404,936 420,927 436,913 452,900 468,883 484,865','#222'));
const small=(y,d)=>Array.from({length:23},(_,i)=>candle([i,y-d*i,y+2-d*i,y-d*i-([13,14].includes(i)?3:0),y+2-d*i,[5,8,10,11,13,14,16,19].includes(i)?G:R])).join('');
put('#expma g:last-child',small(1087,.3)+[[23,1072,1080,1072,1080],[24,1062,1066,1062,1067],[25,1051,1063,1051,1064],[26,1038,1040,1039,1045],[27,1024,1026,1025,1025],[28,1010.5,1020,1010,1029],[29,997.5,1001,997,1026]].map(c=>candle(c,12)).join('')
 +line('20,1088 130,1088 260,1085 353,1084 370,1083 403,1078 437,1068 460,1057 483,1045','#222')
 +line('20,1087 213,1087 300,1085 387,1084 420,1082 450,1078 483,1073','#e9c01e'));
put('#boll g:last-child',small(1195,.18)+[[23,1184,1190,1184,1190],[24,1176,1179,1176,1180],[25,1168,1177,1168,1178],[26,1158,1160,1159,1165],[27,1148,1150,1149,1149],[28,1138,1145,1138,1155],[29,1128,1131,1128,1150]].map(c=>candle(c,12)).join('')
 +line('20,1194 150,1193 250,1192 333,1191 377,1188 400,1183 423,1174 450,1161 467,1150 483,1139','#e9c01e')
 +line('20,1196 240,1195 333,1194 403,1192 450,1186 483,1180','#222')
 +line('20,1197.5 213,1198 340,1197 377,1196 403,1200 450,1212 483,1222','#c82ccc'));
put('#axis g:last-child',Array.from({length:24},(_,k)=>k+6).map(i=>{const b=i==14||i==29;return `<path d="M${20+16*i} 1222v${b?9:5}" stroke="#888" stroke-width="${b?2:1.5}"/>`}).join(''));
</script>
</body>
</html>
